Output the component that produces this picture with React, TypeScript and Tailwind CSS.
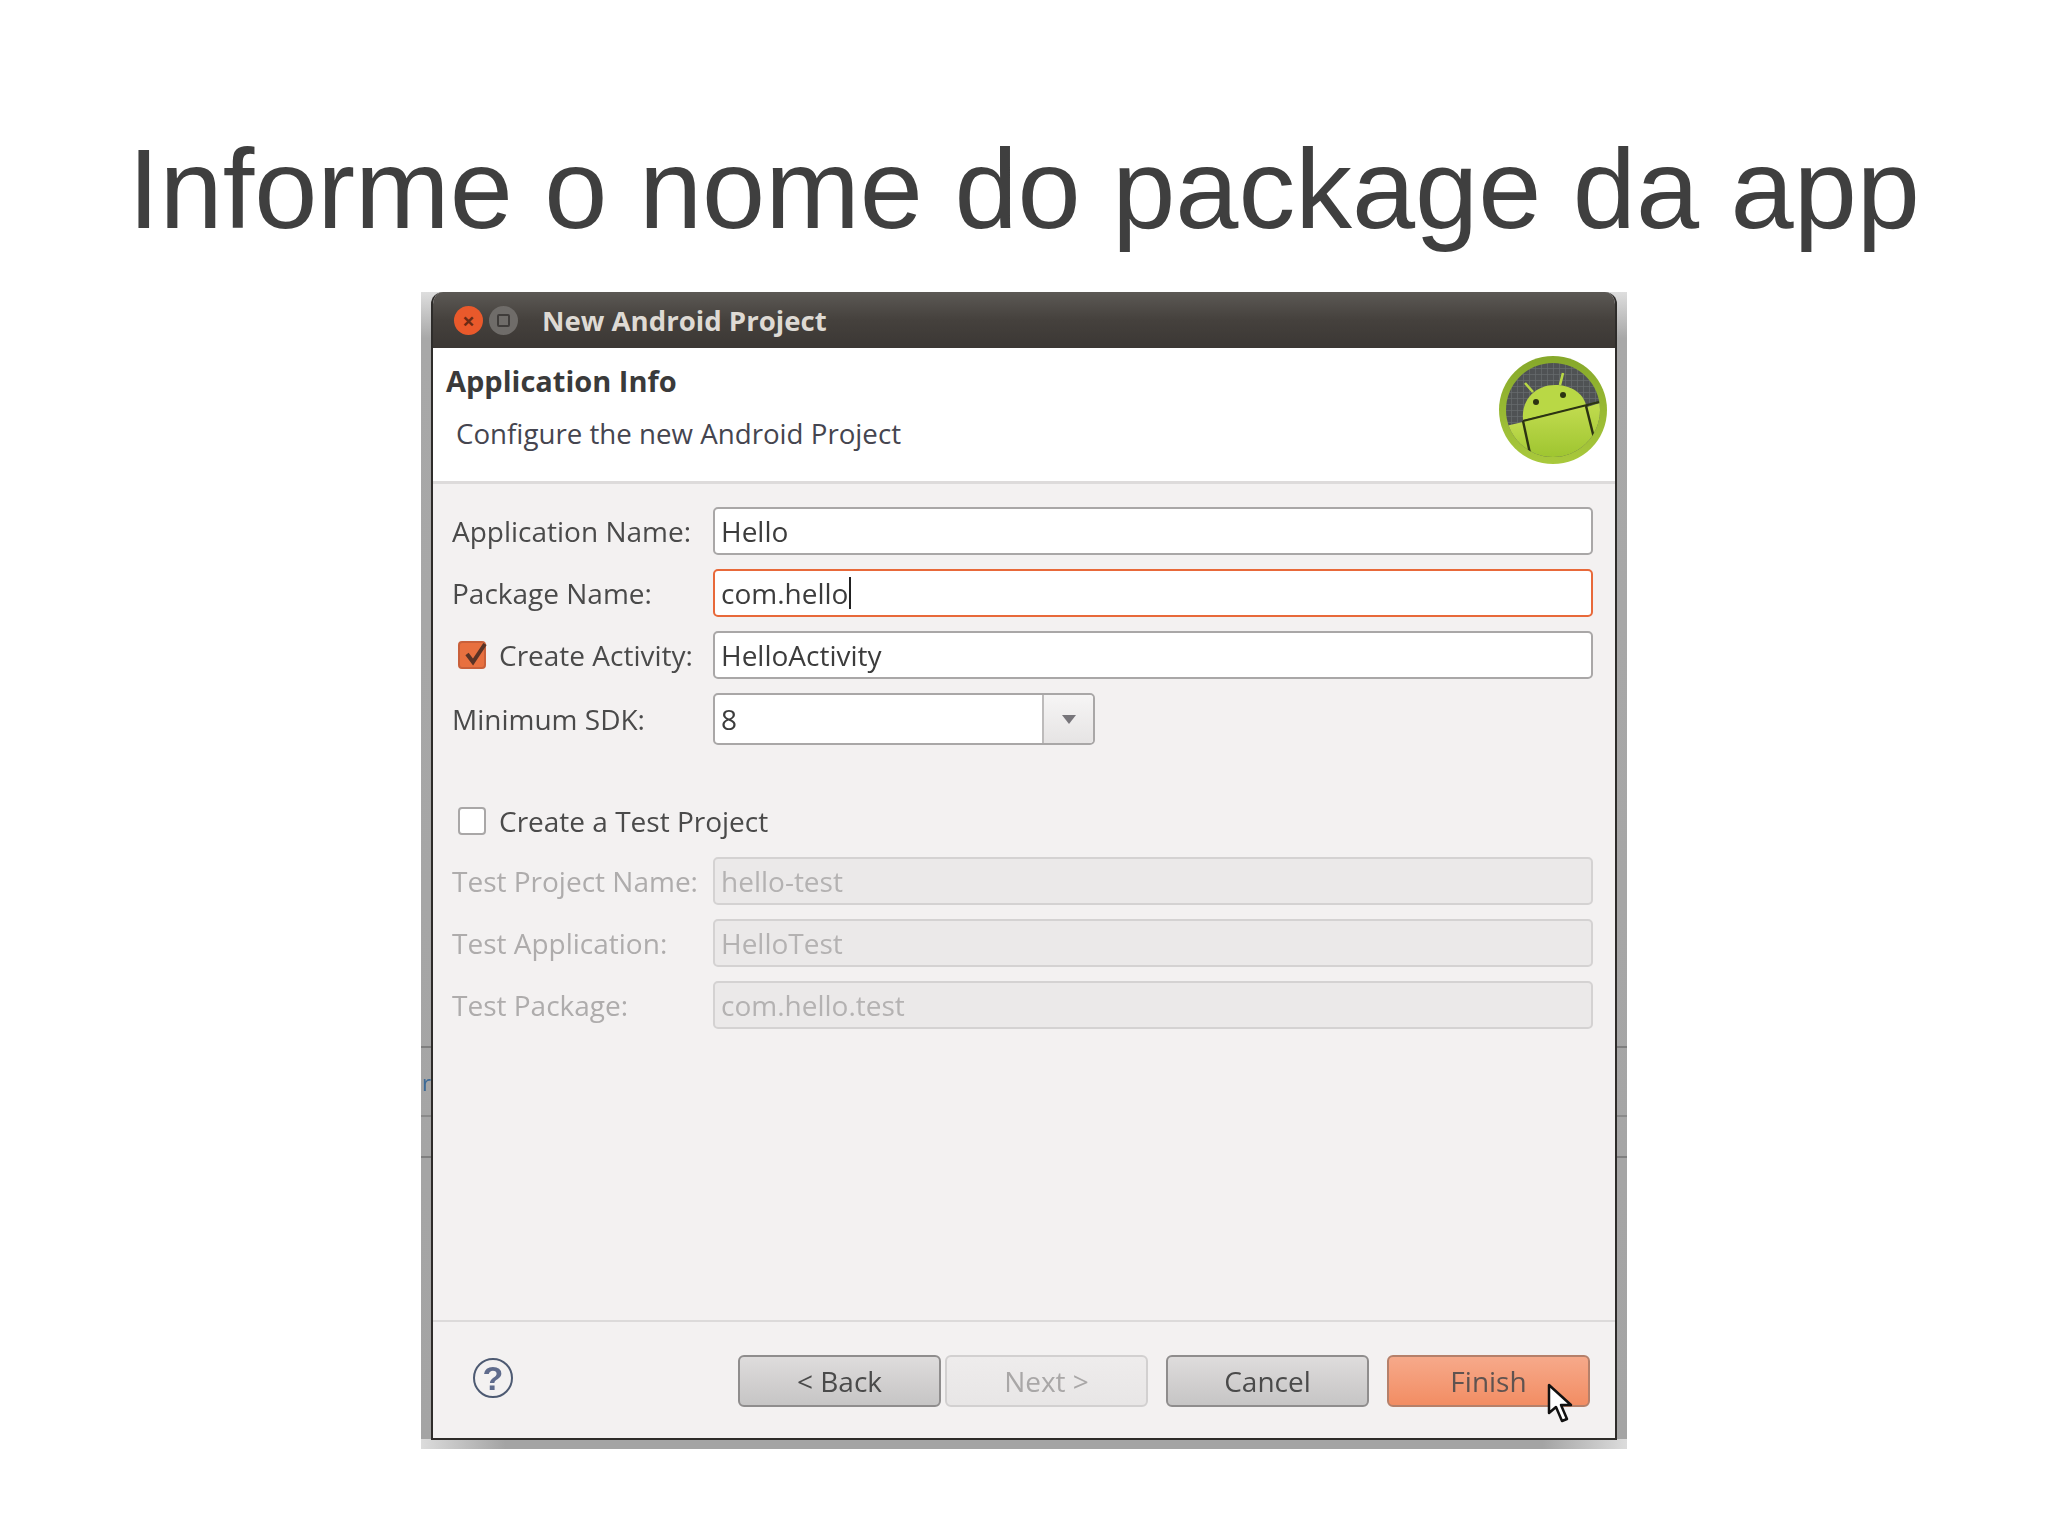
import React from 'react';

const uiFont = "font-['Open_Sans','Noto_Sans',sans-serif]";

function AndroidLogo() {
  return (
    <svg width="108" height="108" viewBox="0 0 108 108" className="shrink-0">
      <defs>
        <clipPath id="disc"><circle cx="54" cy="54" r="47" /></clipPath>
        <linearGradient id="rim" x1="0" y1="0" x2="0" y2="1">
          <stop offset="0" stopColor="#86a82a" />
          <stop offset="1" stopColor="#a9c93c" />
        </linearGradient>
        <linearGradient id="bot" x1="0" y1="0" x2="0" y2="1">
          <stop offset="0" stopColor="#c2dc50" />
          <stop offset="1" stopColor="#9ac22c" />
        </linearGradient>
        <pattern id="mesh" width="6" height="6" patternUnits="userSpaceOnUse">
          <rect width="6" height="6" fill="#4f5254" />
          <path d="M0 0H6M0 0V6" stroke="#666a6c" strokeWidth="1.5" />
        </pattern>
      </defs>
      <circle cx="54" cy="54" r="54" fill="url(#rim)" />
      <circle cx="54" cy="54" r="47" fill="url(#mesh)" />
      <g clipPath="url(#disc)">
        <path d="M0 72 L11 69 L24 66 L33 108 L0 108 Z" fill="url(#bot)" />
        <path d="M88 51 L108 45 L108 108 L97 88 Z" fill="url(#bot)" />
        <path d="M24 65 L87 49 L97 87 C88 100 70 108 54 108 C46 108 40 106 33 102 Z" fill="url(#bot)" />
        <path d="M24 64 C22 42 38 29 56 29 C72 29 84 37 87 49 Z" fill="#b9d845" />
        <path d="M24 65 L100 46" stroke="#2c3312" strokeWidth="2.2" fill="none" />
        <path d="M24 65 L32 102" stroke="#2c3312" strokeWidth="2.4" fill="none" />
        <path d="M87 50 L96 86" stroke="#2c3312" strokeWidth="2.4" fill="none" />
      </g>
      <path d="M26 27 L34 36 M64 17 L61 29" stroke="#b9d845" strokeWidth="2.6" fill="none" />
      <circle cx="37" cy="46" r="3" fill="#2c3312" />
      <circle cx="64" cy="39" r="3" fill="#2c3312" />
    </svg>
  );
}

function FieldRow({ label, value, focused, disabled }: { label: string; value: string; focused?: boolean; disabled?: boolean }) {
  return (
    <div className="flex items-center h-[48px]">
      <span className={`w-[261px] shrink-0 ${disabled ? 'text-[#aeacac]' : 'text-[#4a4a4a]'}`}>{label}</span>
      <TextBox value={value} focused={focused} disabled={disabled} />
    </div>
  );
}

function TextBox({ value, focused, disabled }: { value: string; focused?: boolean; disabled?: boolean }) {
  const look = focused
    ? 'border-[#e8693a] bg-white text-[#3c3c3c]'
    : disabled
      ? 'border-[#d4d2d2] bg-[#ebe9e9] text-[#b4b2b2]'
      : 'border-[#a9a7a7] bg-white text-[#3c3c3c]';
  return (
    <div className={`flex-1 h-[48px] flex items-center px-[6px] border-2 rounded-[5px] ${look}`}>
      {value}
      {focused && <span className="w-[2px] h-[32px] bg-[#222] ml-[1px]" />}
    </div>
  );
}

function WizardButton({ label, variant }: { label: string; variant?: 'off' | 'primary' }) {
  const look =
    variant === 'off'
      ? 'border-[#d2d0d0] bg-gradient-to-b from-[#eeecec] to-[#e8e6e6] text-[#a9a7a7]'
      : variant === 'primary'
        ? 'border-[#b5806a] bg-gradient-to-b from-[#f6a98a] to-[#f28d63] text-[#5f5350]'
        : 'border-[#8f8d8d] bg-gradient-to-b from-[#dedcdc] to-[#c6c5c5] text-[#4a4a4a]';
  return (
    <div className={`w-[203px] h-[52px] flex items-center justify-center rounded-[6px] border-2 ${look}`}>
      {label}
    </div>
  );
}

export default function App() {
  return (
    <div className="w-[2048px] h-[1535px] bg-white overflow-hidden flex flex-col items-center">
      <h1 className="h-[292px] pt-[129px] text-[113.5px] leading-[120px] text-[#3f3f3f] whitespace-nowrap font-['Liberation_Sans',sans-serif]">
        Informe o nome do package da app
      </h1>

      {/* grey shadow strip behind the dialog */}
      <div className="relative w-[1206px] h-[1157px] pl-[10px] pr-[10px] pb-[9px] bg-[linear-gradient(to_bottom,#dedede,#a8a8a8_4%,#a4a4a4)]">
        <div className="absolute left-0 right-0 top-[754px] h-[2px] bg-[#7f7f7f]" />
        <div className="absolute left-0 right-0 top-[823px] h-[2px] bg-[#8a8a8a]" />
        <div className="absolute left-0 right-0 top-[864px] h-[2px] bg-[#7f7f7f]" />
        <span className="absolute left-[1px] top-[774px] text-[22px] text-[#3d6a96] blur-[0.5px]">r</span>
        <div className="absolute left-0 right-0 bottom-0 h-[10px] bg-[linear-gradient(to_right,#dcdcdc,#a4a4a4_7%,#a4a4a4_93%,#dcdcdc)]" />

        <div className={`relative h-full flex flex-col border-2 border-t-0 border-[#2e2c2a] rounded-t-[12px] overflow-hidden bg-[#f3f1f1] text-[28px] blur-[0.5px] ${uiFont}`}>
          {/* title bar */}
          <div className="h-[56px] flex items-center pl-[21px] bg-gradient-to-b from-[#5c5955] via-[#45413d] to-[#3b3734]">
            <div className="w-[29px] h-[29px] rounded-full bg-[#e9592b] flex items-center justify-center text-[22px] leading-none font-bold text-[#6a2a14]">×</div>
            <div className="w-[29px] h-[29px] ml-[6px] rounded-full bg-[#6f6c69] flex items-center justify-center">
              <div className="w-[13px] h-[13px] border-2 border-[#3f3c3a] rounded-[2px]" />
            </div>
            <span className="ml-[24px] pt-[2px] text-[27.6px] font-bold text-[#dedad4]">New Android Project</span>
          </div>

          {/* header */}
          <div className="h-[136px] bg-white border-b-[3px] border-[#dddbdb] flex justify-between pl-[13px] pr-[8px] pt-[8px] text-[#3c3c3c]">
            <div className="pt-[3px]">
              <div className="font-bold text-[29px] leading-[44px] text-[#3a3a3a]">Application Info</div>
              <div className="mt-[10px] ml-[10px] text-[27.7px] text-[#45454f]">Configure the new Android Project</div>
            </div>
            <AndroidLogo />
          </div>

          {/* form */}
          <div className="flex-1 flex flex-col pl-[19px] pr-[22px] pt-[23px]">
            <div className="flex flex-col gap-[14px]">
              <FieldRow label="Application Name:" value="Hello" />
              <FieldRow label="Package Name:" value="com.hello" focused />
              <div className="flex items-center h-[48px]">
                <div className="w-[261px] shrink-0 flex items-center text-[#4a4a4a]">
                  <div className="relative ml-[6px] mr-[13px] w-[28px] h-[28px] rounded-[4px] bg-[#e8703f] border-2 border-[#c9603a]">
                    <svg viewBox="0 0 28 28" className="absolute -left-[2px] -top-[2px] w-[32px] h-[28px]">
                      <path d="M7 13 L13 21 L25 3" stroke="#5a3326" strokeWidth="4" fill="none" />
                    </svg>
                  </div>
                  Create Activity:
                </div>
                <TextBox value="HelloActivity" />
              </div>
              <div className="flex items-center h-[52px]">
                <span className="w-[261px] shrink-0 text-[#4a4a4a]">Minimum SDK:</span>
                <div className="w-[382px] h-[52px] flex border-2 border-[#a9a7a7] rounded-[5px] bg-white text-[#3c3c3c]">
                  <div className="flex-1 flex items-center px-[6px]">8</div>
                  <div className="w-[51px] border-l-2 border-[#bdbbbb] bg-gradient-to-b from-[#f6f5f5] to-[#e6e4e4] rounded-r-[4px] flex items-center justify-center">
                    <div className="w-0 h-0 border-l-[7px] border-r-[7px] border-t-[9px] border-l-transparent border-r-transparent border-t-[#77757a]" />
                  </div>
                </div>
              </div>
            </div>

            <div className="mt-[61px] h-[30px] flex items-center text-[#4a4a4a]">
              <div className="ml-[6px] mr-[13px] w-[28px] h-[28px] rounded-[4px] bg-white border-2 border-[#a9a7a7]" />
              Create a Test Project
            </div>

            <div className="mt-[21px] flex flex-col gap-[14px]">
              <FieldRow label="Test Project Name:" value="hello-test" disabled />
              <FieldRow label="Test Application:" value="HelloTest" disabled />
              <FieldRow label="Test Package:" value="com.hello.test" disabled />
            </div>
          </div>

          {/* footer */}
          <div className="h-[118px] border-t-2 border-[#dcdada] flex items-start pt-[33px] pl-[40px] pr-[25px]">
            <div className="w-[40px] h-[40px] mt-[3px] rounded-full border-2 border-[#4d5a72] flex items-center justify-center text-[34px] leading-none font-bold text-[#5f6b8c] font-['Liberation_Sans',sans-serif]">?</div>
            <div className="ml-auto flex">
              <WizardButton label="< Back" />
              <div className="ml-[4px]"><WizardButton label="Next >" variant="off" /></div>
              <div className="ml-[18px]"><WizardButton label="Cancel" /></div>
              <div className="ml-[18px]"><WizardButton label="Finish" variant="primary" /></div>
            </div>
          </div>

          {/* mouse pointer over the Finish button */}
          <svg viewBox="0 0 26 40" className="absolute right-[42px] bottom-[15px] w-[26px] h-[40px]">
            <path d="M2 2 L2 30 L9 24 L15 38 L20 36 L14 22 L24 22 Z" fill="#fff" stroke="#111" strokeWidth="2.5" strokeLinejoin="round" />
          </svg>
        </div>
      </div>
    </div>
  );
}
